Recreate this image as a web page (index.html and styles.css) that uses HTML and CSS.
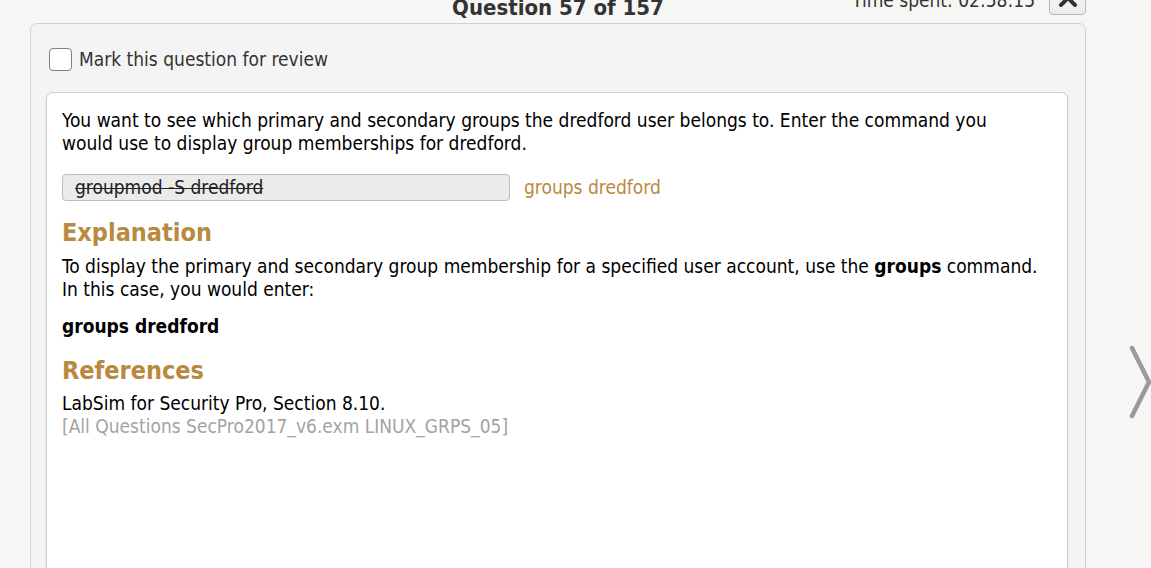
FILE: index.html
```html
<!DOCTYPE html>
<html>
<head>
<meta charset="utf-8">
<link rel="stylesheet" href="styles.css">
</head>
<body>
<div class="page">
  <div class="main">
    <div class="header">
      <div class="spacer"></div>
      <div class="title">Question 57 of 157</div>
      <div class="right">
        <span class="time">Time spent: 02:58:15</span>
        <button class="collapse" type="button">
          <svg width="20" height="12" viewBox="0 0 20 12"><polyline points="3,10 10,3 17,10" fill="none" stroke="#333" stroke-width="4" stroke-linecap="round" stroke-linejoin="round"/></svg>
        </button>
      </div>
    </div>
    <div class="panel">
      <label class="review">
        <input type="checkbox" class="check">
        <span>Mark this question for review</span>
      </label>
      <div class="card">
        <p class="question">You want to see which primary and secondary groups the dredford user belongs to. Enter the command you<br>would use to display group memberships for dredford.</p>
        <div class="answer-row">
          <div class="answer"><s>groupmod -S dredford</s></div>
          <span class="correct">groups dredford</span>
        </div>
        <h2 class="heading">Explanation</h2>
        <p class="text">To display the primary and secondary group membership for a specified user account, use the <b>groups</b> command.<br>In this case, you would enter:</p>
        <p class="cmd">groups dredford</p>
        <h2 class="heading refs">References</h2>
        <p class="ref">LabSim for Security Pro, Section 8.10.</p>
        <p class="ref meta">[All Questions SecPro2017_v6.exm LINUX_GRPS_05]</p>
      </div>
    </div>
  </div>
  <div class="nav">
    <svg class="next" width="24" height="76" viewBox="0 0 24 76"><polyline points="4,4 21,38 4,72" fill="none" stroke="#9a9a9a" stroke-width="4.5" stroke-linecap="round" stroke-linejoin="round"/></svg>
  </div>
</div>
</body>
</html>
```
FILE: styles.css
```css
html, body {
  margin: 0;
  padding: 0;
}
body {
  width: 1151px;
  height: 568px;
  overflow: hidden;
  background: #f6f6f4;
  font-family: "DejaVu Sans Condensed", "DejaVu Sans", sans-serif;
  font-stretch: condensed;
  font-size: 19px;
  line-height: 23px;
  color: #000;
}
.page {
  display: flex;
  margin-top: -20px;
  padding-left: 30px;
}
.main {
  width: 1056px;
  flex: none;
}
.header {
  height: 43px;
  display: grid;
  grid-template-columns: 1fr auto 1fr;
  align-items: start;
}
.title {
  padding-top: 15px;
  font-size: 22px;
  line-height: 26px;
  font-weight: bold;
  color: #333;
}
.right {
  justify-self: end;
  display: flex;
  align-items: flex-start;
  gap: 14px;
  padding-top: 5px;
}
.time {
  padding-top: 4px;
  color: #333;
}
.collapse {
  width: 37px;
  height: 30px;
  margin: 0;
  padding: 9px 0 0;
  border: 1px solid #b8b8b8;
  border-radius: 4px;
  background: linear-gradient(#fafafa, #ececec);
  display: flex;
  justify-content: center;
  align-items: flex-start;
}
.panel {
  height: 600px;
  box-sizing: border-box;
  background: #f4f4f4;
  border: 1px solid #d2d2d2;
  border-radius: 7px 7px 0 0;
  padding: 24px 17px 0 15px;
}
.review {
  display: flex;
  align-items: center;
  gap: 7px;
  padding-left: 3px;
  height: 23px;
  color: #333;
}
.check {
  appearance: none;
  -webkit-appearance: none;
  margin: 0;
  width: 23px;
  height: 23px;
  box-sizing: border-box;
  border: 1px solid #808080;
  border-radius: 4px;
  background: #fff;
}
.card {
  margin-top: 21px;
  height: 560px;
  box-sizing: border-box;
  background: #fff;
  border: 1px solid #cfcfcf;
  border-radius: 7px 7px 0 0;
  box-shadow: 0 1px 3px rgba(0,0,0,0.08);
  padding: 16px 15px 0 15px;
}
p, h2 {
  margin: 0;
}
.answer-row {
  margin-top: 19px;
  display: flex;
  align-items: center;
  gap: 14px;
}
.answer {
  width: 448px;
  height: 27px;
  box-sizing: border-box;
  background: #ebebeb;
  border: 1px solid #bdbdbd;
  border-radius: 4px;
  padding-left: 12px;
  line-height: 25px;
  color: #222;
}
.answer s {
  text-decoration-thickness: 1px;
}
.correct {
  color: #b8893f;
}
.heading {
  margin-top: 17px;
  font-size: 25px;
  line-height: 30px;
  font-weight: bold;
  color: #b8893f;
}
.text {
  margin-top: 7px;
}
.cmd {
  margin-top: 14px;
  font-weight: bold;
}
.refs {
  margin-top: 18px;
}
.ref {
  margin-top: 6px;
}
.ref.meta {
  margin-top: 0;
  color: #a3a3a3;
}
.nav {
  flex: 1;
  padding-top: 364px;
  padding-left: 42px;
}
.next {
  display: block;
}
```
